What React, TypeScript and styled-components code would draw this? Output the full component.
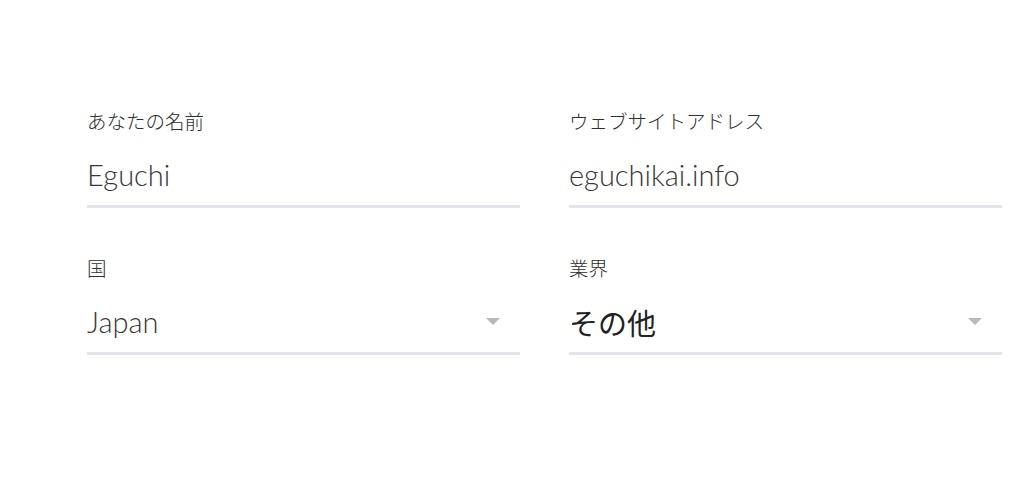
import { FC } from "react";
import { createGlobalStyle, styled } from "styled-components";

const GlobalStyle = createGlobalStyle`
  html, body {
    margin: 0;
    padding: 0;
    background: #ffffff;
  }
  body {
    font-family: Lato, "Noto Sans CJK JP", sans-serif;
    color: #333333;
  }
`;

interface FieldProps {
  label: string;
  value: string;
  select?: boolean;
  cjk?: boolean;
}

const Field: FC<FieldProps> = ({ label, value, select, cjk }) => (
  <StyledField>
    <StyledLabel>{label}</StyledLabel>
    <StyledControl>
      <StyledValue $cjk={cjk}>{value}</StyledValue>
      {select ? <StyledCaret /> : null}
    </StyledControl>
  </StyledField>
);

const App: FC = () => (
  <>
    <GlobalStyle />
    <StyledPage>
      <StyledForm>
        <Field label="あなたの名前" value="Eguchi" />
        <Field label="ウェブサイトアドレス" value="eguchikai.info" />
        <Field label="国" value="Japan" select />
        <Field label="業界" value="その他" select cjk />
      </StyledForm>
    </StyledPage>
  </>
);

export default App;

const StyledPage = styled.div`
  width: 1024px;
  height: 492px;
  padding: 108px 22px 0 87px;
  box-sizing: border-box;
`;

const StyledForm = styled.div`
  display: grid;
  grid-template-columns: 433px 433px;
  column-gap: 49px;
  row-gap: 47px;
`;

const StyledField = styled.div`
  display: flex;
  flex-direction: column;
`;

const StyledLabel = styled.div`
  font-family: "Noto Sans CJK JP", sans-serif;
  font-size: 19.5px;
  line-height: 26px;
  font-weight: 300;
  color: #2e2e2e;
`;

const StyledControl = styled.div`
  display: flex;
  align-items: center;
  justify-content: space-between;
  height: 61px;
  padding-right: 20px;
  border-bottom: 3px solid #e4e4ea;
  margin-top: 10px;
`;

const StyledValue = styled.div<{ $cjk?: boolean }>`
  font-family: ${(p) =>
    p.$cjk ? `"Noto Sans CJK JP", sans-serif` : `Lato, "Noto Sans CJK JP", sans-serif`};
  font-size: 29px;
  font-weight: ${(p) => (p.$cjk ? 400 : 300)};
  color: ${(p) => (p.$cjk ? "#222222" : "#383838")};
  line-height: 36px;
`;

const StyledCaret = styled.span`
  width: 0;
  height: 0;
  border-left: 7px solid transparent;
  border-right: 7px solid transparent;
  border-top: 7px solid #b8b8c0;
`;
